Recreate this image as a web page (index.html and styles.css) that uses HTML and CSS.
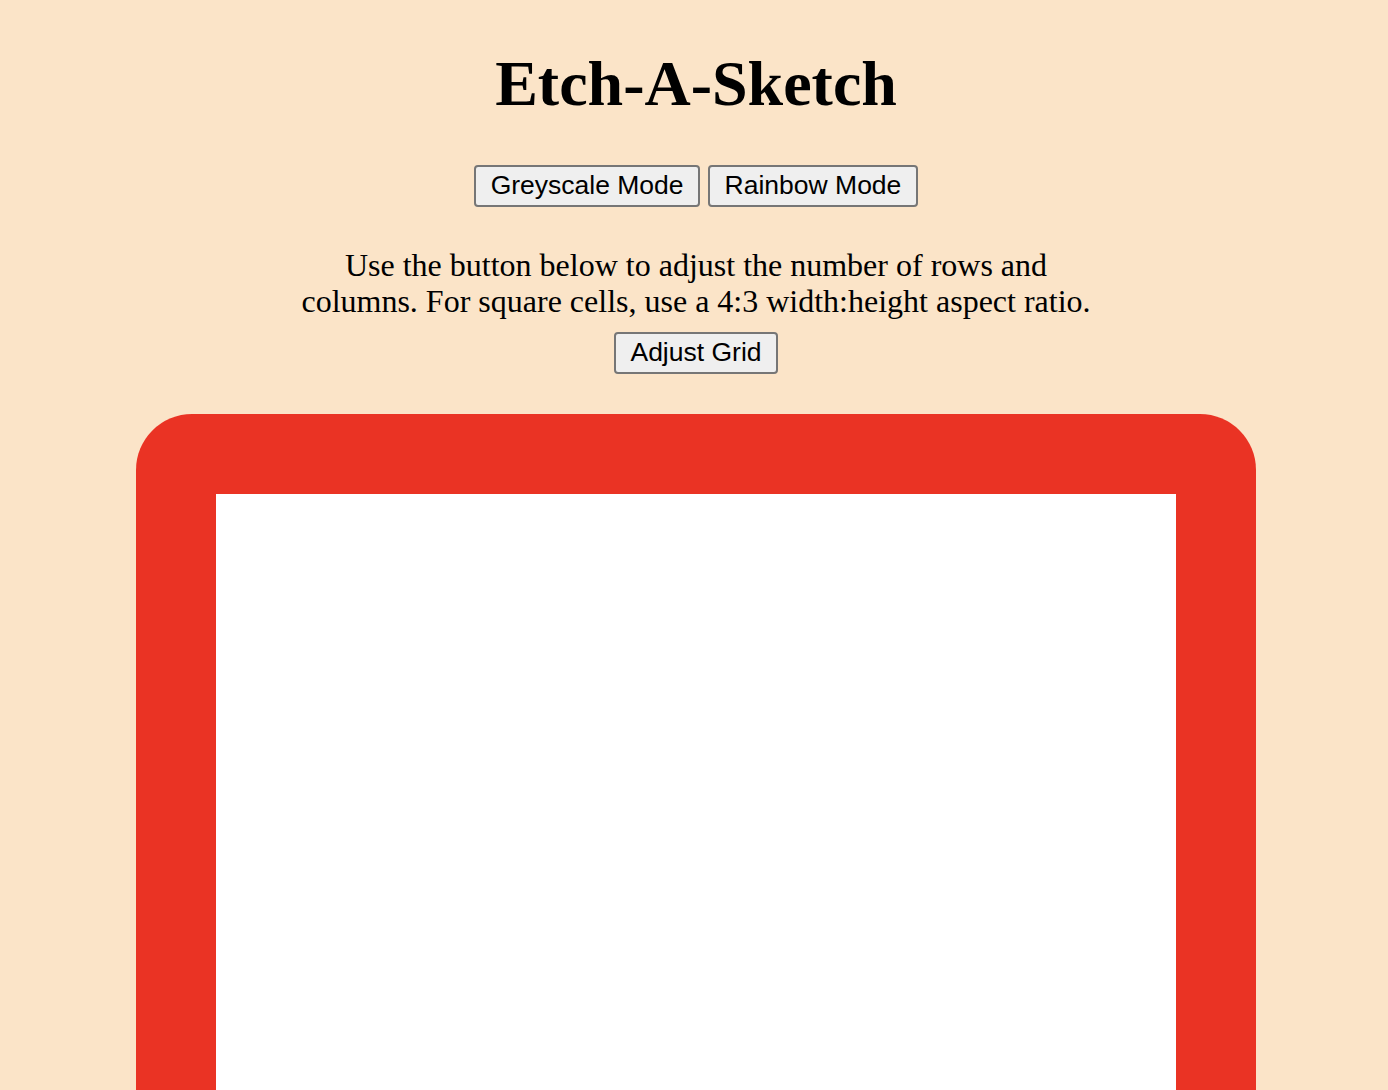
FILE: index.html
```html
<!DOCTYPE html>
<html lang="en">
<head>
<meta charset="utf-8">
<title>Etch-A-Sketch</title>
<link rel="stylesheet" href="styles.css">
</head>
<body>
<main class="page">
  <h1 class="title">Etch-A-Sketch</h1>
  <div class="modes">
    <button class="btn">Greyscale Mode</button>
    <button class="btn">Rainbow Mode</button>
  </div>
  <p class="info">Use the button below to adjust the number of rows and columns. For square cells, use a 4:3 width:height aspect ratio.</p>
  <button class="btn">Adjust Grid</button>
  <div class="frame">
    <div class="screen"></div>
  </div>
</main>
</body>
</html>
```
FILE: styles.css
```css
html, body {
  margin: 0;
  padding: 0;
}
body {
  background: #fbe4c8;
  font-family: "Liberation Serif", "Times New Roman", serif;
  color: #000;
  overflow: hidden;
}
.page {
  display: flex;
  flex-direction: column;
  align-items: center;
  padding-left: 4px;
}
.title {
  font-size: 64px;
  font-weight: bold;
  margin: 47px 0 0;
  line-height: 1.15;
}
.modes {
  display: flex;
  gap: 8px;
  margin-top: 44px;
}
.btn {
  font-family: "Liberation Sans", Arial, sans-serif;
  font-size: 26.5px;
  color: #000;
  background: #efefef;
  border: 2px solid #767676;
  border-radius: 4px;
  padding: 1px 14.5px;
  height: 42px;
}
.info {
  font-size: 32px;
  line-height: 36px;
  max-width: 800px;
  text-align: center;
  margin: 40px 0 13px;
}
.frame {
  margin-top: 40px;
  background: #ea3324;
  border-radius: 56px;
  padding: 80px;
}
.screen {
  width: 960px;
  height: 720px;
  background: #fff;
}
```
